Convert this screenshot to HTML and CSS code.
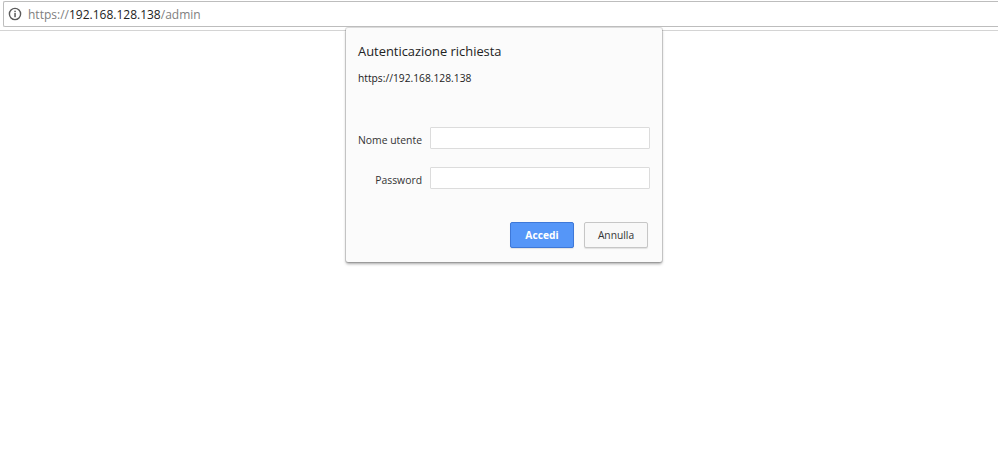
FILE: index.html
```html
<!DOCTYPE html>
<html lang="it">
<head>
<meta charset="utf-8">
<title>Autenticazione richiesta</title>
<link rel="stylesheet" href="styles.css">
</head>
<body>
<header class="toolbar">
  <div class="omnibox">
    <svg class="info" width="14" height="14" viewBox="0 0 14 14" aria-hidden="true">
      <circle cx="7" cy="7" r="5.6" fill="none" stroke="#5a5a5a" stroke-width="1.4"/>
      <rect x="6.3" y="6" width="1.5" height="4.2" fill="#5a5a5a"/>
      <rect x="6.3" y="3.7" width="1.5" height="1.5" fill="#5a5a5a"/>
    </svg>
    <span class="url"><span class="dim">https://</span>192.168.128.138<span class="dim">/admin</span></span>
  </div>
</header>
<form class="dialog">
  <h1 class="title">Autenticazione richiesta</h1>
  <p class="origin">https://192.168.128.138</p>
  <div class="fields">
    <label class="label" for="user">Nome utente</label>
    <input class="input" id="user" type="text">
    <label class="label" for="pass">Password</label>
    <input class="input" id="pass" type="password">
  </div>
  <div class="actions">
    <button class="btn primary" type="button">Accedi</button>
    <button class="btn" type="button">Annulla</button>
  </div>
</form>
</body>
</html>
```
FILE: styles.css
```css
html, body {
  margin: 0;
  padding: 0;
  height: 100%;
  background: #fff;
  font-family: "Open Sans", "Noto Sans", sans-serif;
  overflow: hidden;
}
.toolbar {
  height: 31px;
  padding: 1px 0 0 3px;
  box-sizing: border-box;
  border-bottom: 1px solid #d4d4d4;
}
.omnibox {
  height: 26px;
  box-sizing: border-box;
  border: 1px solid #bdbdbd;
  border-right: 0;
  border-radius: 2px 0 0 2px;
  display: flex;
  align-items: center;
  padding-left: 4px;
  gap: 6px;
  background: #fff;
}
.info { flex: none; }
.url {
  font-size: 12px;
  color: #222;
  white-space: nowrap;
}
.dim { color: #808080; }
.dialog {
  position: absolute;
  left: 346px;
  top: 28px;
  width: 316px;
  height: 234px;
  box-sizing: border-box;
  margin: 0;
  padding: 14px 12px 0;
  background: #fbfbfb;
  border-radius: 2px;
  box-shadow: 0 0 0 1px rgba(0,0,0,.13), 0 2px 3px rgba(0,0,0,.35);
  display: flex;
  flex-direction: column;
}
.title {
  margin: 0;
  font-size: 12.9px;
  font-weight: 400;
  line-height: 18px;
  color: #222;
}
.origin {
  margin: 11px 0 0;
  font-size: 10.25px;
  line-height: 14px;
  color: #222;
}
.fields {
  margin-top: 42px;
  display: grid;
  grid-template-columns: 64px 220px;
  column-gap: 8px;
  row-gap: 18px;
  align-items: center;
}
.label {
  padding-top: 3px;
  font-size: 10.4px;
  color: #333;
  text-align: right;
  white-space: nowrap;
  justify-self: end;
}
.input {
  box-sizing: border-box;
  width: 220px;
  height: 22px;
  margin: 0;
  padding: 0 4px;
  border: 1px solid #dcdcdc;
  border-radius: 1px;
  background: #fff;
}
.actions {
  margin-top: 33px;
  padding-right: 2px;
  display: flex;
  justify-content: flex-end;
  gap: 10px;
}
.btn {
  box-sizing: border-box;
  width: 64px;
  height: 26px;
  padding: 0;
  border: 1px solid #c6c6c6;
  border-radius: 2px;
  background: #f8f8f8;
  box-shadow: 0 1px 1px rgba(0,0,0,.1);
  font: 400 10.25px "Open Sans", "Noto Sans", sans-serif;
  color: #333;
}
.btn.primary {
  background: #5596f8;
  border-color: #3e78d8;
  color: #fff;
  font-weight: 700;
}
```
